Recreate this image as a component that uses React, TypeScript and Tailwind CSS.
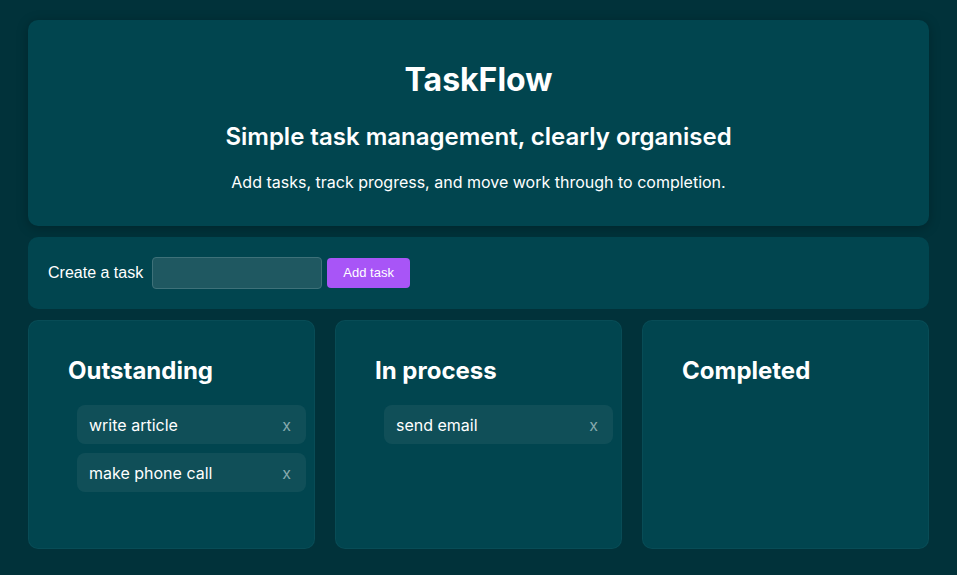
const columns = [
  { title: 'Outstanding', tasks: ['write article', 'make phone call'] },
  { title: 'In process', tasks: ['send email'] },
  { title: 'Completed', tasks: [] as string[] },
];

export default function App() {
  return (
    <div className="min-h-[575px] bg-[#01323a] px-[28px] pt-[20px] pb-[26px] font-['Inter',sans-serif] text-white">
      {/* Header */}
      <header className="rounded-[10px] bg-[#01454f] pt-[40px] pb-[32px] text-center shadow-[0_2px_12px_rgba(0,0,0,0.25)]">
        <h1 className="text-[32px] font-bold leading-[40px]">TaskFlow</h1>
        <h2 className="mt-[21px] text-[24px] font-semibold leading-[32px]">
          Simple task management, clearly organised
        </h2>
        <p className="mt-[17px] text-[16px] leading-[24px]">
          Add tasks, track progress, and move work through to completion.
        </p>
      </header>

      {/* Create form */}
      <form className="mt-[11px] flex h-[72px] items-center rounded-[10px] bg-[#01454f] pl-[20px] font-['Liberation_Sans',Arial,sans-serif]">
        <label className="mr-[4px] text-[16px]">Create a task</label>
        <input
          type="text"
          className="ml-[5px] h-[32px] w-[170px] rounded-[4px] border border-[#3e7179] bg-[#1f5861] px-2 text-white outline-none"
        />
        <button
          type="button"
          className="ml-[5px] h-[30px] w-[83px] rounded-[4px] bg-[#a855f7] text-[13px] text-white"
        >
          Add task
        </button>
      </form>

      {/* Columns */}
      <div className="mt-[11px] grid grid-cols-3 gap-[20px]">
        {columns.map((col) => (
          <section
            key={col.title}
            className="h-[229px] rounded-[10px] border border-[#16596262] bg-[#01454f] pt-[34px] pl-[39px] pr-[8px]"
          >
            <h3 className="text-[24px] font-bold leading-[32px]">{col.title}</h3>
            <ul className="mt-[18px] flex flex-col gap-[9px] pl-[9px]">
              {col.tasks.map((t) => (
                <li
                  key={t}
                  className="flex h-[39px] items-center justify-between rounded-[8px] bg-[#104f58] pl-[12px] pr-[15px] text-[16px]"
                >
                  <span>{t}</span>
                  <span className="text-[#86a9ad]">x</span>
                </li>
              ))}
            </ul>
          </section>
        ))}
      </div>
    </div>
  );
}
